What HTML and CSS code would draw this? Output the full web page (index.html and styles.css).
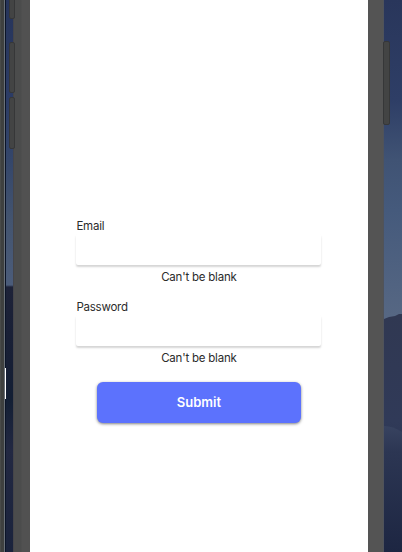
FILE: index.html
```html
<!DOCTYPE html>
<html lang="en">
<head>
<meta charset="utf-8">
<title>Sign in</title>
<link rel="stylesheet" href="styles.css">
</head>
<body>
<div class="desktop">
  <div class="window-edge"></div>
  <div class="wallpaper wallpaper-left"></div>
  <div class="bezel bezel-left">
    <span class="key key-mute"></span>
    <span class="key key-up"></span>
    <span class="key key-down"></span>
  </div>
  <main class="screen">
    <form class="form" novalidate>
      <div class="field">
        <label class="label" for="email">Email</label>
        <input class="input" id="email" type="email">
        <p class="error">Can't be blank</p>
      </div>
      <div class="field">
        <label class="label" for="password">Password</label>
        <input class="input" id="password" type="password">
        <p class="error">Can't be blank</p>
      </div>
      <button class="submit" type="button">Submit</button>
    </form>
  </main>
  <div class="bezel bezel-right"><span class="key key-power"></span></div>
  <div class="wallpaper wallpaper-right">
    <svg class="dunes" viewBox="0 0 18 552" preserveAspectRatio="none">
      <defs>
        <linearGradient id="dune" x1="0" y1="0" x2="0" y2="1">
          <stop offset="0" stop-color="#303852"/>
          <stop offset=".45" stop-color="#303a58"/>
          <stop offset="1" stop-color="#202a47"/>
        </linearGradient>
        <linearGradient id="ridge" x1="0" y1="0" x2="0" y2="1">
          <stop offset="0" stop-color="#384360"/>
          <stop offset=".2" stop-color="#2c3653"/>
          <stop offset="1" stop-color="#1d2642"/>
        </linearGradient>
      </defs>
      <path d="M0 319 L5 317 L11 316 L15 314 L18 314 V552 H0Z" fill="url(#dune)"/>
      <path d="M0 426 Q9 426 18 432 V552 H0Z" fill="url(#ridge)"/>
    </svg>
  </div>
</div>
</body>
</html>
```
FILE: styles.css
```css
* { box-sizing: border-box; }

body {
  margin: 0;
  font-family: Inter, "Liberation Sans", sans-serif;
  color: #2b2b2b;
}

.desktop {
  display: grid;
  grid-template-columns: 6px 7px 17px 338px 16px 18px;
  height: 552px;
  overflow: hidden;
}

.window-edge {
  position: relative;
  background: linear-gradient(90deg, #484a48 0 1px, #3e403f 1px 4px, #697078 4px 5px, #0b1427 5px);
}

/* text caret of the window behind the phone */
.window-edge::after {
  content: "";
  position: absolute;
  left: 5px;
  top: 368px;
  width: 1px;
  height: 31px;
  background: #fff;
}

.wallpaper-left {
  background: linear-gradient(#26345a 0, #2c3c65 100px, #34466a 160px, #43546f 220px, #4b5c7a 285px, #1d2238 287px, #171f35 360px, #131f34 400px, #222842 450px, #1a233c 552px);
}

.wallpaper-right {
  background: linear-gradient(#29365b 0, #2e3e66 100px, #405374 160px, #455a7c 210px, #566783 316px);
}

.dunes { display: block; width: 18px; height: 552px; }

.bezel { position: relative; }

.bezel-left { background: linear-gradient(90deg, #454549 0 1px, #4b4c4c 1px 8px, #515151 9px); }

.bezel-right { background: linear-gradient(90deg, #545454 0 15px, #4f535b 15px); }

.key {
  position: absolute;
  width: 6px;
  border: 1px solid #363738;
  border-radius: 2px;
  background: #434444;
}

.key-mute { left: -4px; top: -10px; height: 29px; }
.key-up { left: -4px; top: 42px; height: 51px; }
.key-down { left: -4px; top: 97px; height: 52px; }
.key-power { left: 15px; top: 41px; width: 7px; height: 84px; z-index: 1; }

.screen { background: #fff; }

.form {
  display: flex;
  flex-direction: column;
  width: 245px;
  margin: 219px 0 0 46.4px;
}

.field {
  display: flex;
  flex-direction: column;
  height: 81.3px;
}

.label, .error {
  margin: 0;
  font-size: 11.5px;
  line-height: 14px;
  letter-spacing: -.22px;
}

.input {
  width: 245px;
  height: 31px;
  margin-top: 1px;
  padding: 0 8px;
  border: 0;
  border-radius: 2px;
  background: #fff;
  box-shadow: 0 2px 2px rgba(0, 0, 0, .17);
  font: inherit;
  font-size: 12px;
  outline: 0;
}

.error { margin-top: 5px; text-align: center; }

.submit {
  align-self: center;
  width: 204px;
  height: 41px;
  padding: 0;
  border: 0;
  border-radius: 6px;
  background: #5c72fd;
  box-shadow: 0 1px 3px rgba(0, 0, 0, .5);
  color: #fff;
  font: 600 13px/41px Inter, "Liberation Sans", sans-serif;
}
```
